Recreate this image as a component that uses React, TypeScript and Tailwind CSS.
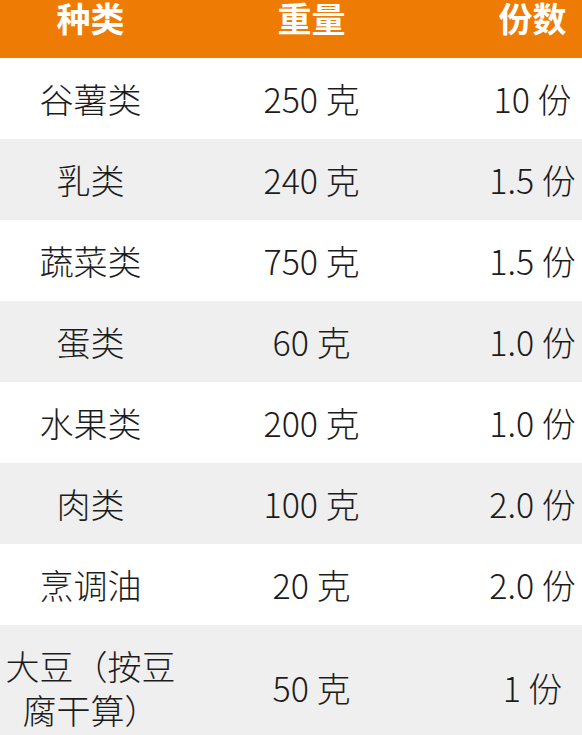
const rows = [
  { name: '谷薯类', weight: '250 克', portion: '10 份' },
  { name: '乳类', weight: '240 克', portion: '1.5 份' },
  { name: '蔬菜类', weight: '750 克', portion: '1.5 份' },
  { name: '蛋类', weight: '60 克', portion: '1.0 份' },
  { name: '水果类', weight: '200 克', portion: '1.0 份' },
  { name: '肉类', weight: '100 克', portion: '2.0 份' },
  { name: '烹调油', weight: '20 克', portion: '2.0 份' },
];

export default function App() {
  return (
    <div
      className="w-[582px] h-[735px] overflow-hidden bg-white"
      style={{ fontFamily: '"Noto Sans CJK SC", "Noto Sans", sans-serif' }}
    >
      <div className="w-[663px] -ml-[20px]">
        {/* Header */}
        <div className="grid grid-cols-3 h-[58px] bg-[#ee7b03] text-white font-bold text-[34px] leading-[36px]">
          <div className="text-center">种类</div>
          <div className="text-center">重量</div>
          <div className="text-center">份数</div>
        </div>

        {/* Rows */}
        {rows.map((r, i) => (
          <div
            key={r.name}
            className={`grid grid-cols-3 h-[81px] items-center text-[34px] font-light text-[#1c1c1c] ${
              i % 2 === 1 ? 'bg-[#efefef]' : 'bg-white'
            }`}
          >
            <div className="text-center">{r.name}</div>
            <div className="text-center">{r.weight}</div>
            <div className="text-center">{r.portion}</div>
          </div>
        ))}

        <div className="grid grid-cols-3 items-center py-[19px] bg-[#efefef] text-[34px] font-light text-[#1c1c1c] leading-[44px]">
          <div className="text-center px-[14px]">大豆（按豆腐干算）</div>
          <div className="text-center">50 克</div>
          <div className="text-center">1 份</div>
        </div>
      </div>
    </div>
  );
}
